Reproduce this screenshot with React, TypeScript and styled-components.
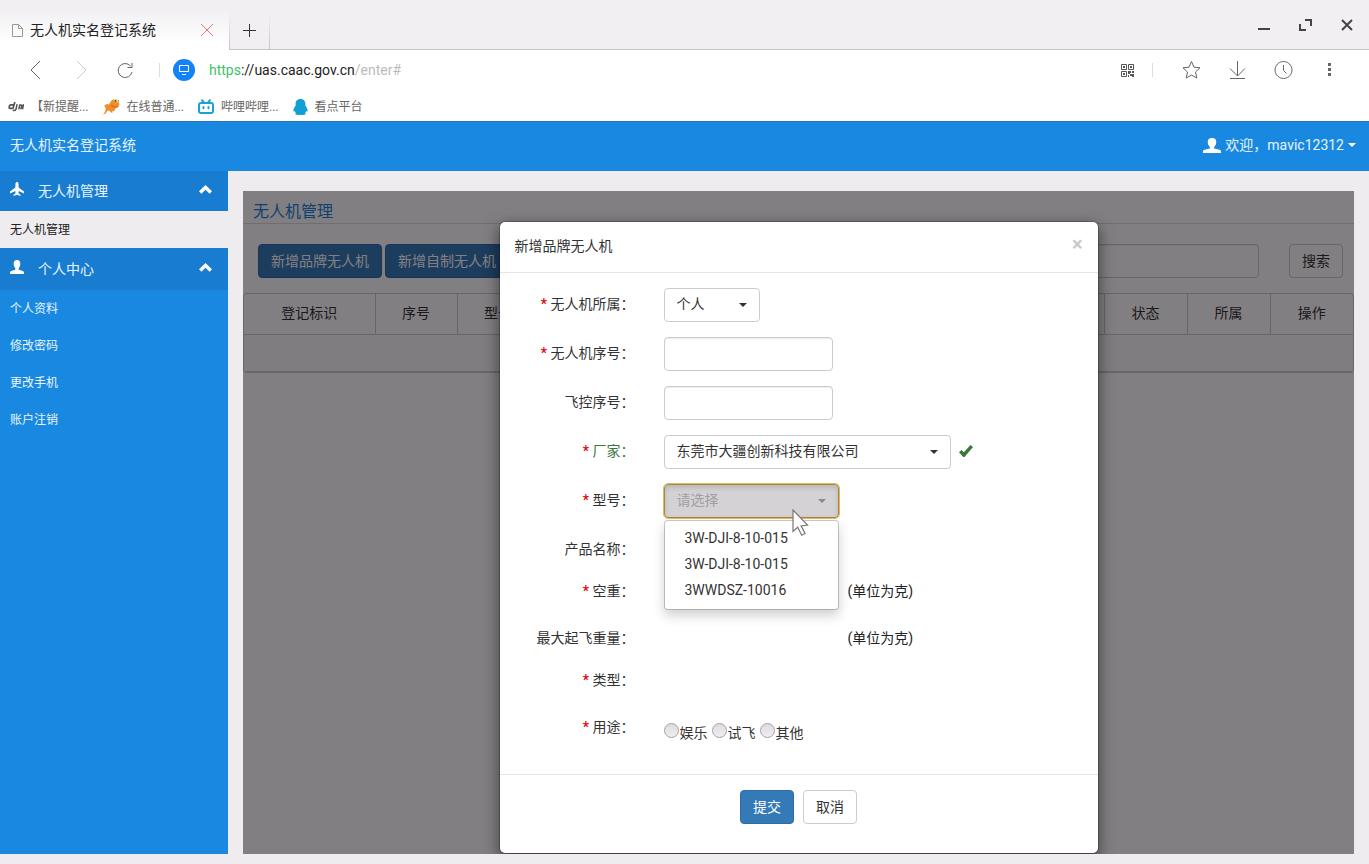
import React from "react";
import styled, { createGlobalStyle } from "styled-components";

const GlobalStyle = createGlobalStyle`
  *, *::before, *::after { box-sizing: border-box; }
  body {
    margin: 0;
    background: #eeecef;
    color: #333;
    font: 14px/20px Roboto, "Noto Sans CJK SC", sans-serif;
  }
  button, input, select { font: inherit; color: inherit; margin: 0; }
  button { cursor: pointer; }
  a { color: inherit; text-decoration: none; }
  ul { list-style: none; margin: 0; padding: 0; }
  svg { display: block; flex: none; }
`;

const Window = styled.div`
  display: flex;
  flex-direction: column;
  min-height: 100vh;
`;

/* ---------- browser frame ---------- */

const TabBar = styled.header`
  display: flex;
  height: 50px;
  background: #f1eff2;
`;

const Tab = styled.div`
  display: flex;
  align-items: center;
  width: 229px;
  padding: 10px 15px 0 12px;
  background: linear-gradient(#f1eff2 20%, #fff 85%);
  color: #222;
`;

const TabTitle = styled.span`
  flex: 1;
  padding-left: 7px;
`;

const BareButton = styled.button`
  display: flex;
  align-items: center;
  justify-content: center;
  padding: 0;
  border: 0;
  background: none;
`;

const NewTab = styled(BareButton)`
  width: 41px;
  padding-top: 11px;
  border-bottom: 1px solid #c4c3c4;
  background:
    linear-gradient(transparent 30%, #c4c3c4) left / 1px 100% no-repeat,
    linear-gradient(transparent 30%, #c4c3c4) right / 1px 100% no-repeat;
`;

const WindowControls = styled.div`
  display: flex;
  flex: 1;
  justify-content: flex-end;
  align-items: center;
  gap: 26px;
  padding-right: 14px;
  border-bottom: 1px solid #c4c3c4;
`;

const AddressBar = styled.div`
  display: flex;
  align-items: center;
  height: 40px;
  padding: 0 30px 0 26px;
  background: #fff;
`;

const NavButtons = styled.div`
  display: flex;
  align-items: center;
  gap: 25px;
`;

const Divider = styled.span`
  width: 1px;
  height: 14px;
  background: #dedede;
`;

const SiteBadge = styled.span`
  display: flex;
  align-items: center;
  justify-content: center;
  width: 22px;
  height: 22px;
  margin: 0 14px 0 13px;
  border-radius: 50%;
  background: #1283f7;
`;

const Url = styled.div`
  flex: 1;
  padding-bottom: 1px;
  color: #222;
`;

const Scheme = styled.span`
  color: #3cc468;
`;

const Path = styled.span`
  color: #bbb;
`;

const Tools = styled.div`
  display: flex;
  align-items: center;
  gap: 26px;
`;

const QrTool = styled.div`
  display: flex;
  align-items: center;
  gap: 18px;
  padding-right: 2px;
`;

const Bookmarks = styled.nav`
  display: flex;
  align-items: center;
  gap: 14px;
  height: 31px;
  padding: 2px 8px 0;
  background: #fff;
  color: #666;
  font-size: 12px;
`;

const Bookmark = styled.a`
  display: flex;
  align-items: center;
  gap: 7px;
`;

/* ---------- application ---------- */

const TopBar = styled.div`
  display: flex;
  justify-content: space-between;
  align-items: center;
  height: 50px;
  padding: 0 13px 3px 10px;
  border-top: 1px solid #2a77ad;
  background: #1888e0;
  color: #e8f5ff;
`;

const UserMenu = styled(BareButton)`
  gap: 4px;
`;

const Body = styled.div`
  display: flex;
  flex: 1;
  padding-bottom: 10px;
`;

const Sidebar = styled.nav`
  width: 228px;
  flex: none;
  background: #1888e0;
  color: #e8f5ff;
`;

const GroupHeader = styled(BareButton)<{ $tall?: boolean }>`
  justify-content: flex-start;
  gap: 14px;
  width: 100%;
  height: ${(p) => (p.$tall ? 42 : 40)}px;
  padding: 0 16px 4px 10px;
  background: #187dd0;
`;

const GroupName = styled.span`
  flex: 1;
  padding-top: 3px;
  text-align: left;
`;

const SideLink = styled.a<{ $active?: boolean }>`
  display: flex;
  align-items: center;
  height: 37px;
  padding-left: 10px;
  font-size: 12px;
  background: ${(p) => (p.$active ? "#eeecef" : "transparent")};
  color: ${(p) => (p.$active ? "#222" : "inherit")};
`;

const Main = styled.main`
  display: grid;
  flex: 1;
  min-width: 0;
  margin: 20px 15px 0;
  background: #fff;
`;

const Page = styled.section`
  grid-area: 1 / 1;
  min-width: 0;
`;

const PageTitle = styled.h1`
  margin: 0;
  padding: 10px 10px 0;
  height: 33px;
  border-bottom: 1px solid #ddd;
  color: #1683d8;
  font-size: 16px;
  font-weight: 400;
  line-height: 22px;
`;

const Toolbar = styled.div`
  display: flex;
  gap: 3px;
  padding: 20px 11px 15px 15px;
`;

const Button = styled.button<{ $primary?: boolean }>`
  height: 34px;
  padding: 0 12px 1px;
  border: 1px solid ${(p) => (p.$primary ? "#2e6da4" : "#ccc")};
  border-radius: 4px;
  background: ${(p) => (p.$primary ? "#337ab7" : "#fff")};
  color: ${(p) => (p.$primary ? "#fff" : "#333")};
`;

const SearchGroup = styled.form`
  display: flex;
  flex: 1;
  justify-content: flex-end;
  gap: 30px;
`;

const TextInput = styled.input`
  width: 169px;
  height: 34px;
  padding: 6px 12px;
  border: 1px solid #ccc;
  border-radius: 4px;
  background: #fff;
  box-shadow: inset 0 1px 1px rgba(0, 0, 0, 0.075);
`;

const TableFrame = styled.div`
  border: 1px solid #ccc;
  border-bottom-width: 2px;
  border-radius: 4px;
`;

const Table = styled.table`
  width: 100%;
  table-layout: fixed;
  border-collapse: collapse;
`;

const Th = styled.th`
  height: 40px;
  padding: 0 0 1px;
  border-bottom: 1px solid #ccc;
  font-weight: 400;
  & + & { border-left: 1px solid #ccc; }
`;

const EmptyCell = styled.td`
  height: 37px;
  padding: 0;
  background: #fafafa;
`;

const Col = styled.col<{ $w?: number }>`
  width: ${(p) => (p.$w ? p.$w + "px" : "auto")};
`;

/* ---------- dialog ---------- */

const Backdrop = styled.div`
  grid-area: 1 / 1;
  display: flex;
  justify-content: center;
  z-index: 1;
  padding-top: 30px;
  overflow: hidden;
  background: rgba(5, 0, 5, 0.5);
`;

const Dialog = styled.section`
  display: flex;
  flex-direction: column;
  width: 600px;
  border: 1px solid rgba(0, 0, 0, 0.2);
  border-radius: 6px;
  background: #fff;
  background-clip: padding-box;
  box-shadow: 0 5px 15px rgba(0, 0, 0, 0.5);
`;

const DialogHeader = styled.div`
  display: flex;
  justify-content: space-between;
  align-items: center;
  height: 51px;
  padding: 0 15px 2px;
  border-bottom: 1px solid #e5e5e5;
`;

const DialogTitle = styled.h2`
  margin: 0;
  font-size: 14px;
  font-weight: 400;
`;

const CloseButton = styled(BareButton)`
  height: 20px;
  padding-bottom: 4px;
  color: #c9c8ca;
  font-size: 20px;
  font-weight: 700;
`;

const Form = styled.form`
  padding: 15px 0 16px;
`;

const Row = styled.div<{ $h?: number }>`
  display: grid;
  grid-template-columns: 135px 1fr;
  column-gap: 29px;
  height: ${(p) => p.$h ?? 34}px;
  margin-bottom: 15px;
`;

const Label = styled.label<{ $valid?: boolean }>`
  padding-top: 6px;
  text-align: right;
  white-space: nowrap;
  color: ${(p) => (p.$valid ? "#3c763d" : "#333")};
`;

const Required = styled.span`
  color: #e00000;
  font-weight: 500;
`;

const Field = styled.div`
  display: flex;
  align-items: flex-start;
`;

const SelectBox = styled.div<{ $w: number }>`
  position: relative;
  width: ${(p) => p.$w}px;
`;

const Select = styled.select<{ $open?: boolean }>`
  appearance: none;
  display: block;
  width: 100%;
  height: 34px;
  padding: 0 12px 2px;
  border: 1px solid ${(p) => (p.$open ? "#a8873f" : "#ccc")};
  border-radius: 4px;
  background: ${(p) => (p.$open ? "#d4d2d5" : "#fff")};
  color: ${(p) => (p.$open ? "#a19fa2" : "#333")};
  outline: ${(p) => (p.$open ? "1px solid #deb95f" : "none")};
  box-shadow: ${(p) => (p.$open ? "inset 0 3px 5px rgba(0, 0, 0, 0.125)" : "none")};
`;

const CaretMark = styled.svg`
  position: absolute;
  right: 13px;
  top: 15px;
  pointer-events: none;
`;

const Menu = styled.ul`
  position: absolute;
  top: 36px;
  left: 0;
  right: 0;
  z-index: 2;
  padding: 5px 0;
  border: 1px solid rgba(0, 0, 0, 0.2);
  border-radius: 4px;
  background: #fff;
  background-clip: padding-box;
  box-shadow: 0 6px 12px rgba(0, 0, 0, 0.18);
`;

const MenuItem = styled.li`
  height: 26px;
  padding: 2px 20px;
`;

const Pointer = styled.svg`
  position: absolute;
  left: 128px;
  top: 25px;
  z-index: 3;
`;

const CheckMark = styled.svg`
  margin: 10px 0 0 8px;
`;

const Unit = styled.span`
  padding: 6px 0 0 184px;
  color: #222;
`;

const RadioGroup = styled.div`
  display: flex;
  gap: 4px;
  padding-top: 12px;
`;

const RadioLabel = styled.label`
  display: flex;
  gap: 1px;
`;

const Radio = styled.input`
  appearance: none;
  width: 15px;
  height: 15px;
  border: 1px solid #a3a1a3;
  border-radius: 50%;
  background: linear-gradient(#dddbdd, #f0eef0);
`;

const DialogFooter = styled.div`
  display: flex;
  flex: 1;
  align-items: flex-start;
  justify-content: center;
  gap: 9px;
  padding: 15px;
  border-top: 1px solid #e5e5e5;
`;

/* ---------- icons ---------- */

const Line = ({ d, w = 18, h = 18, stroke = "#666", sw = 1 }: { d: string; w?: number; h?: number; stroke?: string; sw?: number }) => (
  <svg width={w} height={h} viewBox={`0 0 ${w} ${h}`} fill="none" stroke={stroke} strokeWidth={sw} aria-hidden="true">
    <path d={d} />
  </svg>
);

const Caret = () => (
  <CaretMark width="8" height="4" viewBox="0 0 8 4" aria-hidden="true">
    <path d="M0 0h8L4 4z" fill="#333" />
  </CaretMark>
);

const Person = ({ w = 14, h = 14 }: { w?: number; h?: number }) => (
  <svg width={w} height={h} viewBox="0 0 14 14" preserveAspectRatio="none" fill="#fff" aria-hidden="true">
    <path d="M7 0C4.700 0 3.700 1.400 3.700 3.700c0 1.800.5 3.400 1.600 4.400v1.600L1.200 11C.4 11.400 0 11.800 0 12.600V14h14v-1.400c0-.8-.4-1.200-1.200-1.600L8.700 9.700V8.100c1.100-1 1.600-2.600 1.600-4.400C10.300 1.400 9.300 0 7 0z" />
  </svg>
);

const Plane = () => (
  <svg width="14" height="14" viewBox="0 0 14 14" fill="#fff" aria-hidden="true">
    <path d="M7 0c1 0 1.600 1 1.600 2.600v3L14 9.600v1.900L8.700 8.900l-.2 2.300 2 1.600V14L7 12.800 3.500 14v-1.200l2-1.600-.2-2.300L0 11.500V9.600l5.400-4v-3C5.400 1 6 0 7 0z" />
  </svg>
);

const ChevronUp = () => (
  <svg width="13" height="9" viewBox="0 0 13 9" fill="#fff" aria-hidden="true">
    <path d="M6.500 0 13 6.300 10.600 8.700 6.500 4.700 2.400 8.700 0 6.300z" />
  </svg>
);

const QrIcon = () => (
  <svg width="13" height="13" viewBox="0 0 13 13" fill="none" stroke="#555" aria-hidden="true">
    <path d="M.5.5h5v5h-5zM7.500.5h5v5h-5zM.5 7.500h5v5h-5z" />
    <path d="M2 2h2v2H2zM9 2h2v2H9zM2 9h2v2H2zM7 7h3v2H9v1H7zM11 7h2v2h-2zM9 10h4v3h-2v-1H9zM7 11h1v2H7z" fill="#555" stroke="none" />
  </svg>
);

const DjiLogo = () => (
  <svg width="16" height="10" viewBox="0 0 16 10" fill="none" stroke="#555" strokeWidth="1.700" aria-hidden="true">
    <path d="M5.800 2.900H2.700Q1.700 2.900 1.500 3.800L1.200 5.300Q1 6.400 2 6.400H4.900L6.900 0" />
    <path d="M9.100 2.100 8.200 6.500Q7.800 8.400 6.200 8.400H4.800M10.800 7.300 11.800 2.900H13.800M12.200 6.400H13L14 2.900M15.500 2.100 14.500 7.300" strokeWidth="1.500" />
  </svg>
);

const BirdIcon = () => (
  <svg width="17" height="16" viewBox="0 0 17 16" aria-hidden="true">
    <path d="M5.500 5.500 7.500 3.200C8 1 10 0 12.300.2L15 1.300l.8 2.200.7 1.700-1.300 2.800-2.600 1.300-1.300 2.600-2.400.5.8 1.400-1.700-.2-1.500-1.800H4.300L2.500 14.800 0 15.500l2-2.500.8-3.500-1.600-2.700L3.500 5z" fill="#f28c2c" />
    <path d="M8 5.200 11 7.300l4.600-.3-1.100 1.300-2.700.5-3.300-1.100z" fill="#d96c1b" />
    <path d="m10.500.2 3 .1 2.500.9-.7 1.600-2.300.6-2-1.200z" fill="#f8d872" />
    <circle cx="12.500" cy="1.900" r="1" fill="#2f5c52" />
    <path d="m14.600.8 1.500.4-.6 1.500z" fill="#3aa7a0" />
  </svg>
);

const BiliIcon = () => (
  <svg width="16" height="16" viewBox="0 0 16 16" fill="none" stroke="#1fa1cf" strokeWidth="2" strokeLinecap="round" aria-hidden="true">
    <rect x="1" y="4" width="14" height="10" rx="2" />
    <path d="m4 1.200 1.500 1.800M12 1.200 10.500 3M5.500 8v1.200M10.500 8v1.200" />
  </svg>
);

const PenguinIcon = () => (
  <svg width="15" height="16" viewBox="0 0 15 16" fill="#129fd4" aria-hidden="true">
    <path d="M7.500 0c3.400 0 4.900 2.200 4.900 5v1.700c1.600 1.700 2.400 3.700 2.200 5.300-.2 1-.9.500-1.500 0-.2.8-.4 1.300-1 1.900.7.5.9 1.300.1 1.700-1.200.5-3.600.5-4.700.1-1.100.4-3.500.4-4.700-.1-.8-.4-.6-1.200.1-1.700-.6-.6-.8-1.100-1-1.900-.6.5-1.300 1-1.500 0-.2-1.600.6-3.600 2.200-5.300V5c0-2.800 1.500-5 4.900-5z" />
  </svg>
);

const BOOKMARKS = [
  { text: "【新提醒...", icon: <DjiLogo /> },
  { text: "在线普通...", icon: <BirdIcon /> },
  { text: "哔哩哔哩...", icon: <BiliIcon /> },
  { text: "看点平台", icon: <PenguinIcon /> },
];

const ACCOUNT_LINKS = ["个人资料", "修改密码", "更改手机", "账户注销"];
const MODELS = ["3W-DJI-8-10-015", "3W-DJI-8-10-015", "3WWDSZ-10016"];
const USES = ["娱乐", "试飞", "其他"];

const RowLabel = ({ text, required, valid, htmlFor, id }: { text: string; required?: boolean; valid?: boolean; htmlFor?: string; id?: string }) => (
  <Label as={htmlFor ? "label" : "div"} htmlFor={htmlFor} id={id} $valid={valid}>
    {required && <Required>* </Required>}
    {text}：
  </Label>
);

function Browser() {
  return (
    <>
      <TabBar>
        <Tab>
          <Line w={11} h={13} stroke="#999" d="M.5.5h6l4 4v8H.5zM6.500.5v4h4" />
          <TabTitle>无人机实名登记系统</TabTitle>
          <BareButton aria-label="关闭标签页">
            <Line w={14} h={14} stroke="#e4777b" d="m1 1 12 12M13 1 1 13" />
          </BareButton>
        </Tab>
        <NewTab aria-label="新标签页">
          <Line w={13} h={13} stroke="#333" d="M6.500 0v13M0 6.500h13" />
        </NewTab>
        <WindowControls>
          <BareButton aria-label="最小化"><Line w={16} h={16} sw={2} stroke="#444" d="M3 12h12" /></BareButton>
          <BareButton aria-label="还原"><Line w={16} h={16} sw={2} stroke="#444" d="M8 3h6v6M3 7v6h6" /></BareButton>
          <BareButton aria-label="关闭"><Line w={16} h={16} sw={2} stroke="#444" d="m3 3 10 10M13 3 3 13" /></BareButton>
        </WindowControls>
      </TabBar>
      <AddressBar>
        <NavButtons>
          <BareButton aria-label="后退"><Line w={20} h={20} d="m14 1-9 9 9 9" /></BareButton>
          <BareButton aria-label="前进"><Line w={20} h={20} stroke="#ccc" d="m6 1 9 9-9 9" /></BareButton>
          <BareButton aria-label="刷新"><Line w={18} h={18} d="M16 11A7 7 0 1 1 14.500 5M16 2v4.500h-4.500" /></BareButton>
          <Divider />
        </NavButtons>
        <SiteBadge>
          <Line w={10} h={10} stroke="#fff" d="M.5.5h9v6h-9zM3 9.500h4" />
        </SiteBadge>
        <Url>
          <Scheme>https</Scheme>://uas.caac.gov.cn<Path>/enter#</Path>
        </Url>
        <Tools>
          <QrTool>
            <BareButton aria-label="二维码"><QrIcon /></BareButton>
            <Divider />
          </QrTool>
          <BareButton aria-label="收藏">
            <Line w={20} h={20} d="m10.500 1.500 2.500 5.700 6 .6-4.500 4.200 1.300 6-5.300-3-5.300 3L6.500 12 2 7.800l6-.6z" />
          </BareButton>
          <BareButton aria-label="下载"><Line w={20} h={20} d="M10.500 1v15M3 8.500l7.500 7.500L18 8.500M3 18.500h15" /></BareButton>
          <BareButton aria-label="历史"><Line w={20} h={20} d="M10.500 1.500a8.500 8.500 0 1 0 .01 0zM10.500 5v5.500l3 3" /></BareButton>
          <BareButton aria-label="更多">
            <Line w={20} h={20} sw={3} d="M10.500 3v3M10.500 8v3M10.500 13v3" />
          </BareButton>
        </Tools>
      </AddressBar>
      <Bookmarks>
        {BOOKMARKS.map((b) => (
          <Bookmark href="#" key={b.text}>{b.icon}{b.text}</Bookmark>
        ))}
      </Bookmarks>
    </>
  );
}

function AddDroneDialog() {
  return (
    <Dialog role="dialog" aria-labelledby="dialog-title">
      <DialogHeader>
        <DialogTitle id="dialog-title">新增品牌无人机</DialogTitle>
        <CloseButton aria-label="关闭">×</CloseButton>
      </DialogHeader>
      <Form id="drone-form">
        <Row>
          <RowLabel text="无人机所属" required htmlFor="owner" />
          <Field>
            <SelectBox $w={96}><Select id="owner"><option>个人</option></Select><Caret /></SelectBox>
          </Field>
        </Row>
        <Row>
          <RowLabel text="无人机序号" required htmlFor="serial" />
          <Field><TextInput id="serial" /></Field>
        </Row>
        <Row>
          <RowLabel text="飞控序号" htmlFor="controller" />
          <Field><TextInput id="controller" /></Field>
        </Row>
        <Row>
          <RowLabel text="厂家" required valid htmlFor="maker" />
          <Field>
            <SelectBox $w={287}>
              <Select id="maker"><option>东莞市大疆创新科技有限公司</option></Select>
              <Caret />
            </SelectBox>
            <CheckMark width="14" height="12" viewBox="0 0 14 12" aria-hidden="true">
              <path d="m0 7.300 2.400-2.400 2.500 2.300L11.500 0 14 2.100 5.500 12H4.200z" fill="#3c763d" />
            </CheckMark>
          </Field>
        </Row>
        <Row>
          <RowLabel text="型号" required htmlFor="model" />
          <Field>
            <SelectBox $w={175}>
              <Select id="model" $open><option>请选择</option></Select>
              <CaretMark width="8" height="4" viewBox="0 0 8 4" aria-hidden="true">
                <path d="M0 0h8L4 4z" fill="#8b898c" />
              </CaretMark>
              <Menu>
                {MODELS.map((m, i) => <MenuItem key={i}>{m}</MenuItem>)}
              </Menu>
              <Pointer width="17" height="28" viewBox="0 0 17 28" aria-hidden="true">
                <path d="M1 1v21.500l4.700-4.300 4 8 3.400-1.700-4-7.600 6.500-.9z" fill="#fff" stroke="#777" strokeWidth="1.200" />
              </Pointer>
            </SelectBox>
          </Field>
        </Row>
        <Row $h={27}><RowLabel text="产品名称" /></Row>
        <Row $h={32}>
          <RowLabel text="空重" required />
          <Field><Unit>(单位为克)</Unit></Field>
        </Row>
        <Row $h={27}>
          <RowLabel text="最大起飞重量" />
          <Field><Unit>(单位为克)</Unit></Field>
        </Row>
        <Row $h={32}><RowLabel text="类型" required /></Row>
        <Row $h={32}>
          <RowLabel text="用途" required id="use-label" />
          <RadioGroup role="radiogroup" aria-labelledby="use-label">
            {USES.map((u) => (
              <RadioLabel key={u}><Radio type="radio" name="use" />{u}</RadioLabel>
            ))}
          </RadioGroup>
        </Row>
      </Form>
      <DialogFooter>
        <Button $primary form="drone-form">提交</Button>
        <Button type="button">取消</Button>
      </DialogFooter>
    </Dialog>
  );
}

export default function App() {
  return (
    <Window>
      <GlobalStyle />
      <Browser />
      <TopBar>
        <span>无人机实名登记系统</span>
        <UserMenu>
          <Person w={18} h={15} />
          <span>欢迎，mavic12312</span>
          <svg width="8" height="4" viewBox="0 0 8 4" aria-hidden="true"><path d="M0 0h8L4 4z" fill="#fff" /></svg>
        </UserMenu>
      </TopBar>
      <Body>
        <Sidebar>
          <GroupHeader><Plane /><GroupName>无人机管理</GroupName><ChevronUp /></GroupHeader>
          <SideLink href="#" $active>无人机管理</SideLink>
          <GroupHeader $tall><Person /><GroupName>个人中心</GroupName><ChevronUp /></GroupHeader>
          {ACCOUNT_LINKS.map((t) => <SideLink href="#" key={t}>{t}</SideLink>)}
        </Sidebar>
        <Main>
          <Page>
            <PageTitle>无人机管理</PageTitle>
            <Toolbar>
              <Button $primary>新增品牌无人机</Button>
              <Button $primary>新增自制无人机</Button>
              <SearchGroup>
                <TextInput aria-label="搜索" />
                <Button type="button">搜索</Button>
              </SearchGroup>
            </Toolbar>
            <TableFrame>
              <Table>
                <colgroup>
                  <Col $w={131} /><Col $w={82} /><Col $w={82} /><Col /><Col $w={83} /><Col $w={83} /><Col $w={83} />
                </colgroup>
                <thead>
                  <tr>
                    <Th>登记标识</Th><Th>序号</Th><Th>型号</Th><Th /><Th>状态</Th><Th>所属</Th><Th>操作</Th>
                  </tr>
                </thead>
                <tbody><tr><EmptyCell colSpan={7} /></tr></tbody>
              </Table>
            </TableFrame>
          </Page>
          <Backdrop><AddDroneDialog /></Backdrop>
        </Main>
      </Body>
    </Window>
  );
}
